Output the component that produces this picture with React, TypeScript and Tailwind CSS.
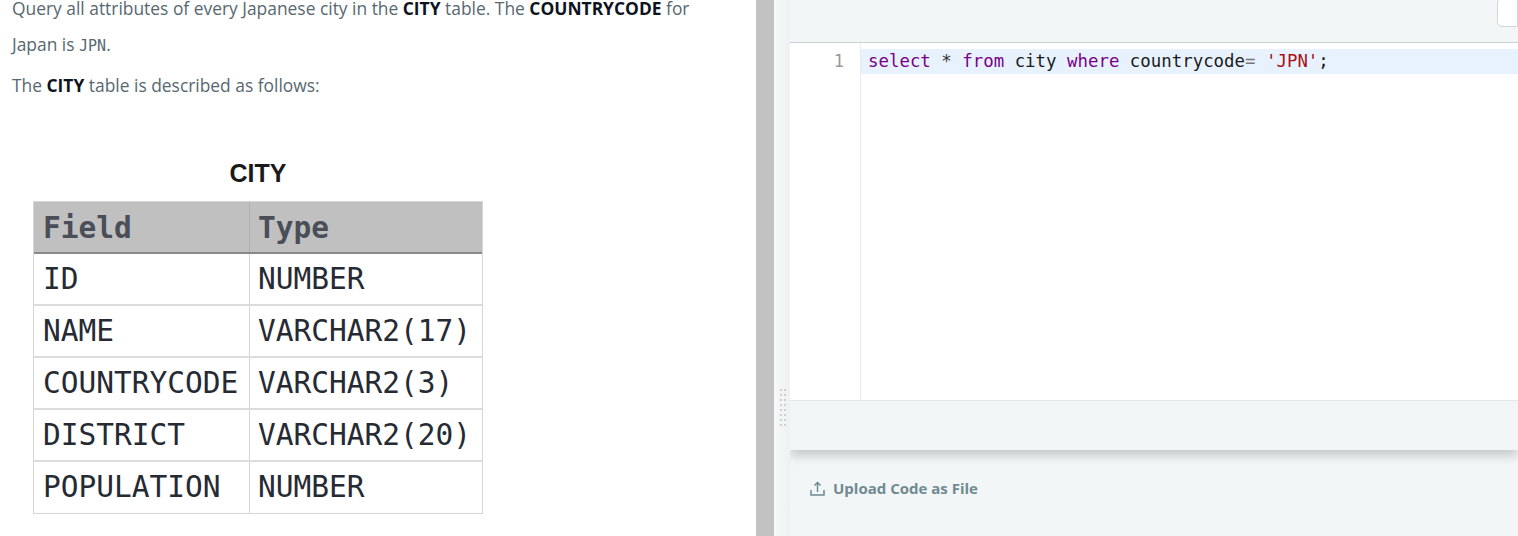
import React from "react";

const rows: [string, string][] = [
  ["ID", "NUMBER"],
  ["NAME", "VARCHAR2(17)"],
  ["COUNTRYCODE", "VARCHAR2(3)"],
  ["DISTRICT", "VARCHAR2(20)"],
  ["POPULATION", "NUMBER"],
];

function UploadIcon() {
  return (
    <svg width="15" height="15" viewBox="0 0 15 15" fill="none" stroke="#6f8a91" strokeWidth="1.5">
      <path d="M7.5 11V1.5" />
      <path d="M4.5 4.5L7.5 1.5L10.5 4.5" />
      <path d="M1 9V14H14V9" />
    </svg>
  );
}

export default function App() {
  return (
    <div className="w-[1518px] h-[536px] flex overflow-hidden bg-white">
      {/* Left problem statement */}
      <div className="w-[756px] shrink-0 bg-white pl-[12px] font-['Open_Sans',sans-serif] text-[17.4px] text-[#576871]">
        <p className="-mt-[10px] leading-[36px] w-[700px]">
          Query all attributes of every Japanese city in the <b className="text-[#0e141e]">CITY</b> table. The{" "}
          <b className="text-[#0e141e]">COUNTRYCODE</b> for Japan is{" "}
          <code className="font-['DejaVu_Sans_Mono',monospace] text-[15px]">JPN</code>.
        </p>
        <p className="mt-[3px] leading-[36px]">
          The <b className="text-[#0e141e]">CITY</b> table is described as follows:
        </p>
        <div className="mt-[55px] ml-[21px] w-[450px]">
          <div className="text-center font-['Liberation_Sans',sans-serif] font-bold text-[25px] leading-[30px] text-[#1a1a1a]">
            CITY
          </div>
          <div className="mt-[13px] border border-[#d6d6d6] font-['DejaVu_Sans_Mono',monospace] text-[29.5px]">
            <div className="flex h-[52px] bg-[#c0c0c0] border-b-2 border-[#888888] text-[#4a4e58] font-bold">
              <div className="w-[216px] border-r border-[#b0b0b0] pl-[9px] flex items-center pt-[2px]">Field</div>
              <div className="flex-1 pl-[8px] flex items-center pt-[2px]">Type</div>
            </div>
            {rows.map(([a, b], i) => (
              <div
                key={a}
                className={`flex text-[#262a33] ${i < rows.length - 1 ? "h-[52px] border-b-2 border-[#dcdcdc]" : "h-[51px]"}`}
              >
                <div className="w-[216px] border-r border-[#d6d6d6] pl-[9px] flex items-center">{a}</div>
                <div className="flex-1 pl-[8px] flex items-center">{b}</div>
              </div>
            ))}
          </div>
        </div>
      </div>

      {/* Divider */}
      <div className="w-[18px] shrink-0 bg-[#c2c2c2]" />

      {/* Right editor area */}
      <div className="flex-1 flex bg-[#f3f6f7] relative">
        <div className="w-[16px] shrink-0 bg-gradient-to-r from-[#f7f9f9] to-[#eef1f2] relative">
          <div className="absolute left-[6px] top-[389px] grid grid-cols-2 gap-x-[2px] gap-y-[3px]">
            {Array.from({ length: 16 }).map((_, i) => (
              <div key={i} className="w-[2px] h-[2px] bg-[#cfcfcf]" />
            ))}
          </div>
        </div>
        <div className="flex-1 flex flex-col">
          <div className="shadow-[0_6px_10px_rgba(0,0,0,0.18)]">
            <div className="h-[43px] bg-[#f3f6f7] border-b border-[#c9d1d5] relative">
              <div className="absolute right-0 -top-[2px] w-[21px] h-[29px] bg-white border border-[#d0d6d9] rounded-bl-[5px] rounded-tl-[5px]" />
            </div>
            <div className="h-[357px] bg-white flex">
              <div className="w-[71px] border-r border-[#ececec] pt-[6px] text-right pr-[16px] font-['DejaVu_Sans_Mono',monospace] text-[17px] leading-[25px] text-[#999999]">
                1
              </div>
              <div className="flex-1 pt-[6px]">
                <div className="h-[25px] bg-[#e8f2fe] pl-[7px] font-['DejaVu_Sans_Mono',monospace] text-[17.4px] leading-[25px] text-[#1a1a1a] whitespace-pre">
                  <span className="text-[#770088]">select</span> <span className="text-[#333]">*</span>{" "}
                  <span className="text-[#770088]">from</span> city <span className="text-[#770088]">where</span>{" "}
                  countrycode<span className="text-[#777]">=</span> <span className="text-[#aa1111]">'JPN'</span>;
                </div>
              </div>
            </div>
            <div className="h-[50px] bg-[#f3f6f7] border-t border-[#e3e7e9]" />
          </div>
          <div className="mt-[27px] ml-[20px] flex items-center gap-[8px] font-['Open_Sans',sans-serif] font-bold text-[15px] text-[#6f8a91]">
            <UploadIcon />
            <span>Upload Code as File</span>
          </div>
        </div>
      </div>
    </div>
  );
}
